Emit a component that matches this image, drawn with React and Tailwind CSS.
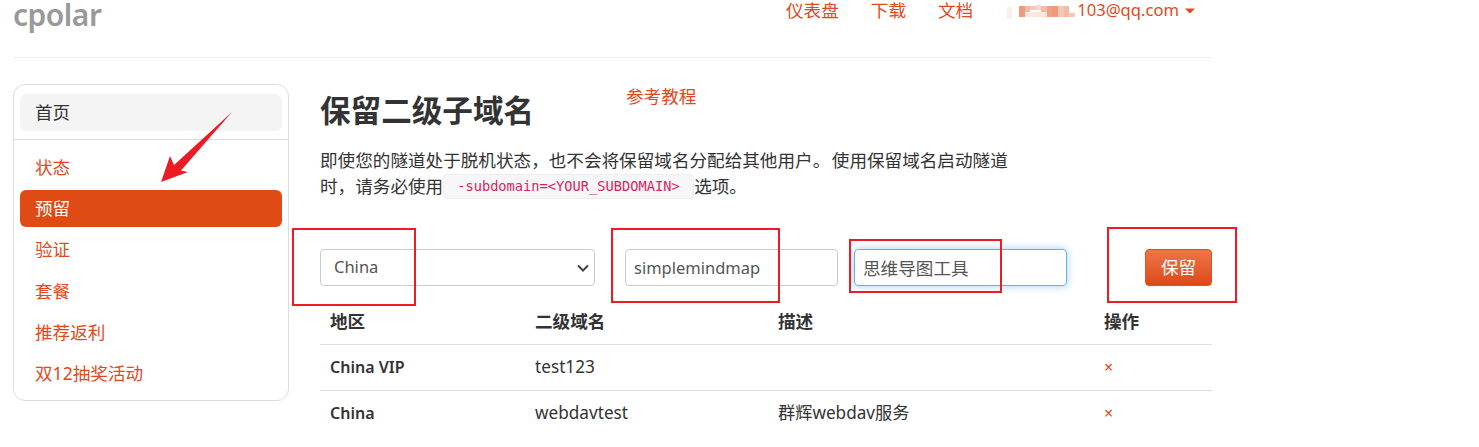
const font = { fontFamily: '"Noto Sans", "Noto Sans CJK SC", sans-serif' };

const sideItems = [
  { label: '状态' },
  { label: '预留', active: true },
  { label: '验证' },
  { label: '套餐' },
  { label: '推荐返利' },
  { label: '双12抽奖活动' },
];

const rows = [
  { region: 'China VIP', name: 'test123', desc: '' },
  { region: 'China', name: 'webdavtest', desc: '群辉webdav服务' },
];

const mosaic = [
  [0, 6, 5, 12, '#fdeee8'], [12, 5, 6, 11, '#ee9a7c'], [18, 5, 5, 6, '#f4b9a2'], [23, 5, 6, 4, '#f6c7b5'],
  [29, 4, 5, 5, '#f9d8cb'], [34, 5, 6, 6, '#f4b9a2'], [40, 5, 5, 11, '#f0a184'], [45, 5, 6, 11, '#ee9a7c'],
  [51, 5, 6, 11, '#f6c7b5'], [57, 5, 5, 11, '#f4b9a2'], [62, 12, 6, 4, '#f6c7b5'], [18, 11, 22, 5, '#fce8e0'],
];

function Sidebar() {
  return (
    <aside className="w-[276px] h-[317px] shrink-0 border border-[#dcdcdc] rounded-xl px-[6px] pt-[9px]">
      <div className="h-[37px] rounded-md bg-[#f4f4f4] flex items-center px-[15px] text-[#333] text-[17.6px]">首页</div>
      <div className="border-t border-[#dcdcdc] -mx-[6px] mt-2 mb-[8.5px]"></div>
      <div className="flex flex-col gap-[4.3px]">
        {sideItems.map((item) => (
          <div
            key={item.label}
            className={
              item.active
                ? 'h-[37px] rounded-md bg-[#e04a14] text-white flex items-center px-[15px] text-[17.6px]'
                : 'h-[37px] rounded-md text-[#e2491a] flex items-center px-[15px] text-[17.6px]'
            }
          >
            {item.label}
          </div>
        ))}
      </div>
    </aside>
  );
}

export default function App() {
  return (
    <div className="relative w-[1479px] h-[447px] overflow-hidden bg-white" style={font}>
      <div className="w-[1199px] ml-[13px]">
        <header className="h-[58px] border-b border-[#eeeeee] flex items-start justify-between">
          <div className="text-[30px] leading-none font-semibold text-[#999999] tracking-[-0.5px]">cpolar</div>
          <nav className="flex items-center text-[17.6px] text-[#e2491a] h-[21px] pr-[17px]">
            <span>仪表盘</span>
            <span className="ml-[32px]">下载</span>
            <span className="ml-[32px]">文档</span>
            <svg className="ml-[34px]" width="70" height="20" viewBox="0 0 70 20">
              {mosaic.map(([x, y, w, h, fill], i) => (
                <rect key={i} x={x} y={y} width={w} height={h} fill={fill} />
              ))}
            </svg>
            <span className="text-[16.6px]">103@qq.com</span>
            <svg className="ml-[6px]" width="10" height="6" viewBox="0 0 10 6">
              <path d="M0 0.5h10L5 5.5z" fill="#e2491a" />
            </svg>
          </nav>
        </header>

        <div className="flex mt-[26px] gap-[31px]">
          <Sidebar />

          <main className="w-[892px] shrink-0">
            <div className="flex items-start h-[53px]">
              <h1 className="w-[306px] mt-[3px] text-[30.6px] leading-[46px] font-bold text-[#333]">保留二级子域名</h1>
              <a className="text-[17.6px] leading-[24px] text-[#e2491a]">参考教程</a>
            </div>
            <p className="w-[700px] mt-[10px] text-[17.6px] leading-[26px] text-[#333] [word-spacing:-3px]">
              即使您的隧道处于脱机状态，也不会将保留域名分配给其他用户。 使用保留域名启动隧道时，请务必使用
              <code
                className="inline-block h-[25px] w-[251px] px-[13px] align-[2px] border border-[#eeeef2] rounded bg-[#f7f7f9] text-[#e01e5a] text-[13.7px] leading-[23px] whitespace-nowrap"
                style={{ fontFamily: '"DejaVu Sans Mono", monospace' }}
              >
                -subdomain=&lt;YOUR_SUBDOMAIN&gt;
              </code>
              选项。
            </p>

            <form className="flex items-start mt-[50px]">
              <div className="w-[275px] h-[37px] border border-[#cccccc] rounded flex items-center justify-between pl-[13px] pr-[5px] text-[16.5px] text-[#555]">
                <span>China</span>
                <svg width="12" height="8" viewBox="0 0 12 8" fill="none" stroke="#444" strokeWidth="2">
                  <path d="M1 1.5l5 5 5-5" />
                </svg>
              </div>
              <input
                readOnly
                value="simplemindmap"
                className="ml-[30px] w-[213px] h-[37px] border border-[#cccccc] rounded px-2 text-[16.5px] text-[#555] outline-none"
              />
              <input
                readOnly
                value="思维导图工具"
                className="ml-[16px] w-[213px] h-[37px] border border-[#66afe9] rounded px-2 text-[17.6px] text-[#555] outline-none shadow-[0_0_8px_rgba(102,175,233,0.6)]"
              />
              <button
                type="button"
                className="ml-[78px] w-[67px] h-[37px] rounded border border-[#d9531e] bg-gradient-to-b from-[#ef7548] to-[#dd4814] text-white text-[17.6px]"
              >
                保留
              </button>
            </form>

            <table className="w-[892px] mt-[12px] table-fixed text-[17.2px] text-[#333]">
              <colgroup>
                <col className="w-[205px]" />
                <col className="w-[243px]" />
                <col className="w-[326px]" />
                <col className="w-[118px]" />
              </colgroup>
              <thead>
                <tr className="h-[46px] border-b border-[#dddddd] font-bold text-left text-[17.6px]">
                  <th className="px-[10px] font-bold">地区</th>
                  <th className="px-[10px] font-bold">二级域名</th>
                  <th className="px-[10px] font-bold">描述</th>
                  <th className="px-[10px] font-bold">操作</th>
                </tr>
              </thead>
              <tbody>
                {rows.map((row, i) => (
                  <tr key={row.region} className={i === 0 ? 'h-[46px] border-b border-[#dddddd]' : 'h-[46px]'}>
                    <td className="px-[10px] font-semibold text-[16px]">{row.region}</td>
                    <td className="px-[10px]">{row.name}</td>
                    <td className="px-[10px]">{row.desc}</td>
                    <td className="px-[10px] text-[#e2491a] text-[16px]">×</td>
                  </tr>
                ))}
              </tbody>
            </table>
          </main>
        </div>
      </div>

      {/* red annotations drawn on top of the screenshot */}
      <div className="absolute left-[292px] top-[228px] w-[124px] h-[78px] border-2 border-[#ed1c24]"></div>
      <div className="absolute left-[611px] top-[228px] w-[169px] h-[75px] border-2 border-[#ed1c24]"></div>
      <div className="absolute left-[849px] top-[239px] w-[153px] h-[54px] border-2 border-[#ed1c24]"></div>
      <div className="absolute left-[1107px] top-[227px] w-[130px] h-[76px] border-2 border-[#ed1c24]"></div>
      <svg className="absolute left-[155px] top-[108px]" width="82" height="78" viewBox="155 108 82 78">
        <path d="M232 112L181 170.500L188 172L161 182L170 156L174 165Z" fill="#ed1c24" />
      </svg>
    </div>
  );
}
